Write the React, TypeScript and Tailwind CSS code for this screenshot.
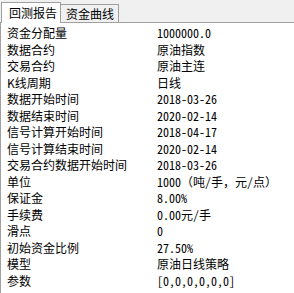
import React from "react";

type Row = { label: string; value: string };

const rows: Row[] = [
  { label: "资金分配量", value: "1000000.0" },
  { label: "数据合约", value: "原油指数" },
  { label: "交易合约", value: "原油主连" },
  { label: "K线周期", value: "日线" },
  { label: "数据开始时间", value: "2018-03-26" },
  { label: "数据结束时间", value: "2020-02-14" },
  { label: "信号计算开始时间", value: "2018-04-17" },
  { label: "信号计算结束时间", value: "2020-02-14" },
  { label: "交易合约数据开始时间", value: "2018-03-26" },
  { label: "单位", value: "1000（吨/手，元/点）" },
  { label: "保证金", value: "8.00%" },
  { label: "手续费", value: "0.00元/手" },
  { label: "滑点", value: "0" },
  { label: "初始资金比例", value: "27.50%" },
  { label: "模型", value: "原油日线策略" },
  { label: "参数", value: "[0,0,0,0,0,0]" },
];

export default function App() {
  return (
    <div
      className="w-[294px] h-[293px] bg-[#f0f0f0] text-black text-[12px] overflow-hidden"
      style={{ fontFamily: '"Noto Sans CJK SC", "Noto Sans", sans-serif' }}
    >
      {/* Tabs */}
      <div className="flex items-end h-[22px] pl-[1px]">
        <div className="relative z-10 -mb-px h-[21px] w-[60px] bg-white border border-b-0 border-[#a0a0a0] pl-[7px] leading-[19px]">
          回测报告
        </div>
        <div className="h-[18px] w-[58px] bg-[#f0f0f0] border border-b-0 border-l-0 border-[#a0a0a0] pl-[5px] leading-[17px]">
          资金曲线
        </div>
      </div>

      {/* Report panel */}
      <div className="h-[271px] bg-white border-t border-l border-[#a0a0a0] pt-[2px]">
        {rows.map((row) => (
          <div key={row.label} className="flex h-[16.53px] items-center leading-none">
            <div className="w-[156px] pl-[6px] whitespace-nowrap">{row.label}</div>
            <div
              className="whitespace-nowrap"
              style={{ fontFamily: '"Noto Sans Mono CJK SC", "Noto Sans CJK SC", monospace' }}
            >
              {row.value}
            </div>
          </div>
        ))}
      </div>
    </div>
  );
}
